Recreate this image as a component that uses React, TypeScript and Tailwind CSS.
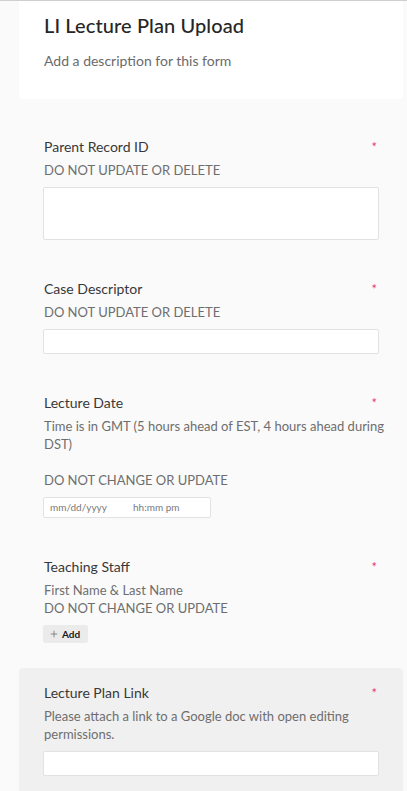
import { Plus } from 'lucide-react';

const font = { fontFamily: 'Lato, "Open Sans", "Liberation Sans", sans-serif' };

type FieldProps = {
  label: string;
  lines: string[];
  children: React.ReactNode;
  highlight?: boolean;
  last?: boolean;
};

const Field = ({ label, lines, children, highlight, last }: FieldProps) => (
  <div
    className={`px-[25px] pt-[15px] ${highlight ? 'bg-[#f0f0f0] rounded-t-[4px] pb-[30px]' : ''} ${last ? '' : 'pb-[24px]'}`}
  >
    <div className="flex justify-between pr-[1px]">
      <div className="text-[14px] leading-[20px] text-[#383838]">{label}</div>
      <span className="pt-[2px] text-[13px] leading-[16px] text-[#e83a6c]">*</span>
    </div>
    <div className="mt-[4px] whitespace-nowrap text-[13px] leading-[18px] text-[#6e6e6e]">
      {lines.map((l, i) => (
        <div key={i} className="min-h-[18px]">
          {l}
        </div>
      ))}
    </div>
    <div className="mt-2">{children}</div>
  </div>
);

const TextBox = ({ tall }: { tall?: boolean }) => (
  <div
    className={`-ml-px mr-[-1px] w-[336px] rounded-[2px] border border-[#e2e2e2] bg-white ${tall ? 'h-[53px]' : 'h-[25px]'}`}
  />
);

export default function App() {
  return (
    <div className="min-h-screen border-t border-[#cfcfcf] bg-[#fafafa]" style={font}>
      <div className="ml-[19px] mr-[4px]">
        <div className="rounded-b-[4px] bg-white px-[25px] pt-[9px] pb-[28px]">
          <h1 className="text-[20px] leading-[30px] font-medium tracking-[0.1px] text-[#262626]">
            LI Lecture Plan Upload
          </h1>
          <p className="mt-[11px] text-[14px] leading-[20px] text-[#6b6b6b]">
            Add a description for this form
          </p>
        </div>

        <div className="pt-[23px]">
          <Field label="Parent Record ID" lines={['DO NOT UPDATE OR DELETE']}>
            <TextBox tall />
          </Field>
          <Field label="Case Descriptor" lines={['DO NOT UPDATE OR DELETE']}>
            <TextBox />
          </Field>
          <Field
            label="Lecture Date"
            lines={[
              'Time is in GMT (5 hours ahead of EST, 4 hours ahead during',
              'DST)',
              '',
              'DO NOT CHANGE OR UPDATE',
            ]}
          >
            <div className="-ml-px flex h-[21px] w-[168px] items-center rounded-[2px] border border-[#e2e2e2] bg-white pl-[6px] text-[10px] text-[#7a7a7a]">
              <span className="w-[83px]">mm/dd/yyyy</span>
              <span>hh:mm pm</span>
            </div>
          </Field>
          <Field
            label="Teaching Staff"
            lines={['First Name & Last Name', 'DO NOT CHANGE OR UPDATE']}
          >
            <button className="-ml-px flex h-[18px] w-[45px] items-center gap-[3px] rounded-[2px] bg-[#ebebeb] pl-[6px] text-[10px] font-bold text-[#1a1a1a]">
              <Plus className="h-[10px] w-[10px] text-[#555]" strokeWidth={1.5} />
              Add
            </button>
          </Field>
          <div className="h-[1px]" />
          <Field
            highlight
            last
            label="Lecture Plan Link"
            lines={['Please attach a link to a Google doc with open editing', 'permissions.']}
          >
            <TextBox />
          </Field>
        </div>
      </div>
    </div>
  );
}
